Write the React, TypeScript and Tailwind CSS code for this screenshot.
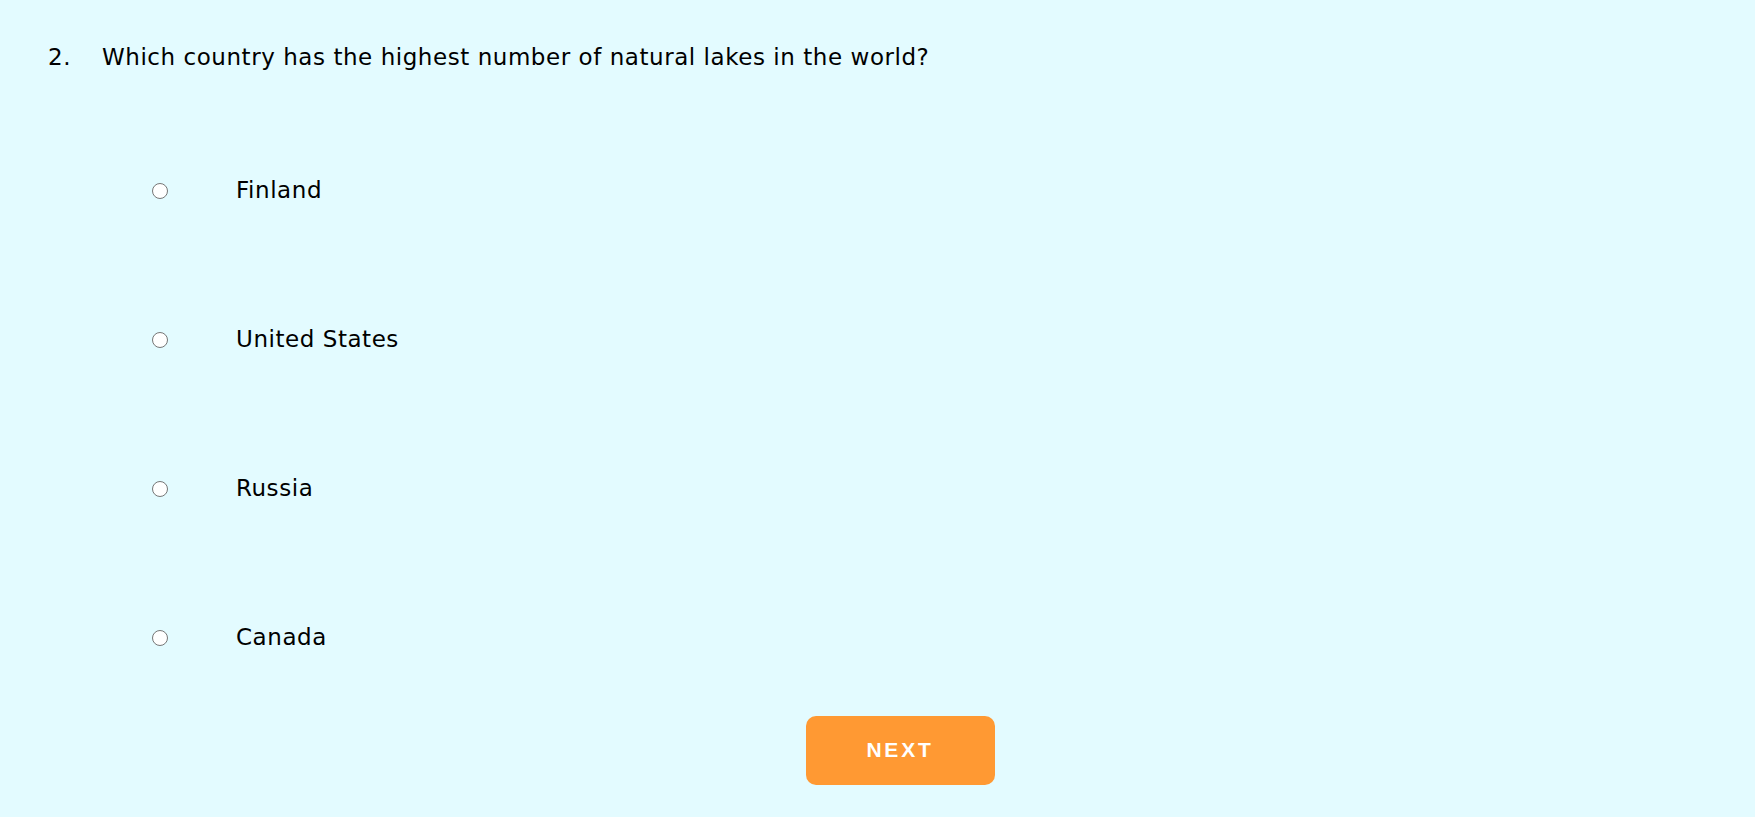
import { useState } from "react"

const options = ["Finland", "United States", "Russia", "Canada"]

export default function App() {
  const [picked, setPicked] = useState<string | null>(null)

  return (
    <div className="min-h-[817px] w-full bg-[#e3fbff] text-black font-['DejaVu_Sans',sans-serif]">
      <div className="flex items-baseline pl-[48px] pt-[40px] text-[23px] tracking-[0.55px]">
        <span className="w-[54px]">2.</span>
        <span>Which country has the highest number of natural lakes in the world?</span>
      </div>

      <div className="flex flex-col pl-[152px] pt-[108px] gap-[133px]">
        {options.map((opt) => (
          <label key={opt} className="flex items-center h-[16px] cursor-pointer" onClick={() => setPicked(opt)}>
            <span className="w-[16px] h-[16px] rounded-full border border-[#767676] bg-white flex items-center justify-center">
              {picked === opt && <span className="w-[8px] h-[8px] rounded-full bg-[#0075ff]" />}
            </span>
            <span className="ml-[68px] text-[23px] tracking-[0.55px]">{opt}</span>
          </label>
        ))}
      </div>

      <div className="flex justify-center pt-[70px] pl-[45px]">
        <button className="w-[189px] h-[69px] rounded-[10px] bg-[#ff9933] text-white font-bold text-[21px] tracking-[2.8px] font-['Liberation_Sans',sans-serif]">
          NEXT
        </button>
      </div>
    </div>
  )
}
